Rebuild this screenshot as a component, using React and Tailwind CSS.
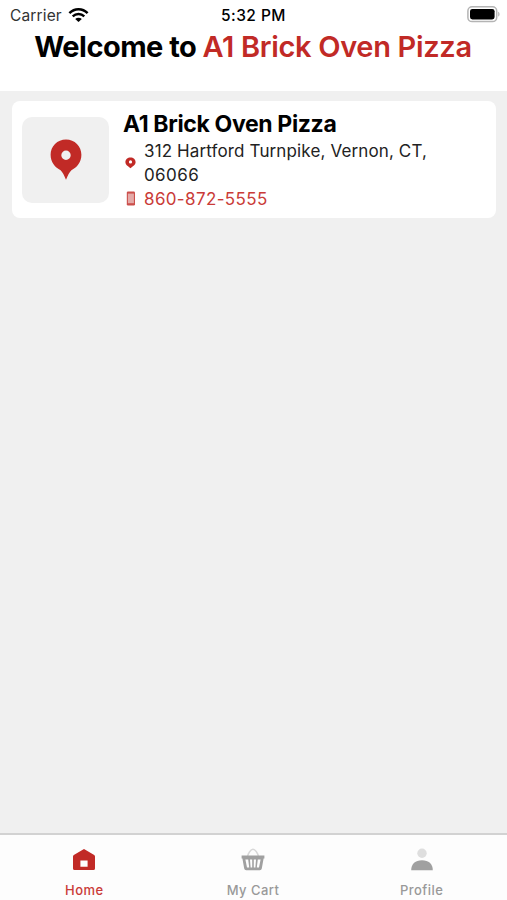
import { useState } from 'react';

const WifiIcon = () => (
  <svg width="21" height="16" viewBox="0 0 21 16" fill="none">
    <path d="M1.4 6.2C6.5 1 14.5 1 19.6 6.2" stroke="#000" strokeWidth="2.5" />
    <path d="M4.7 9.4C8 6.2 13 6.2 16.3 9.4" stroke="#000" strokeWidth="2.4" />
    <path d="M10.5 15L7.2 11.9C9 10.2 12 10.2 13.8 11.9Z" fill="#000" />
  </svg>
);

const BatteryIcon = () => (
  <svg width="34" height="17" viewBox="0 0 34 17" fill="none">
    <rect x="0.9" y="0.8" width="28.8" height="14.8" rx="4.2" stroke="#b4b4b4" strokeWidth="1.5" />
    <rect x="3" y="2.9" width="24.6" height="10.6" rx="2.4" fill="#000" />
    <path d="M31.2 5.8v4.8C33 10 33 6.4 31.2 5.8Z" fill="#b4b4b4" />
  </svg>
);

const PinIcon = ({ className }) => (
  <svg className={className} viewBox="0 0 32 42" fill="#c12a26">
    <path
      fillRule="evenodd"
      d="M16 0.5C7.3 0.5 0.6 7.2 0.6 15.8C0.6 23.2 5.2 28.8 10.6 31.2C12.6 33 14.2 36.5 16 40.8C17.8 36.5 19.4 33 21.4 31.2C26.8 28.8 31.4 23.2 31.4 15.8C31.4 7.2 24.7 0.5 16 0.5ZM16 11.5A4.7 4.7 0 1 1 16 20.9A4.7 4.7 0 1 1 16 11.5Z"
    />
  </svg>
);

const SmallPinIcon = () => (
  <svg width="11" height="12" viewBox="0 0 11 12" fill="#c12a26">
    <path
      fillRule="evenodd"
      d="M5.5 0.4C2.6 0.4 0.4 2.4 0.4 5.1C0.4 8 3 9.2 5.5 11.2C8 9.2 10.6 8 10.6 5.1C10.6 2.4 8.4 0.4 5.5 0.4ZM5.5 3.3A1.6 1.6 0 1 1 5.5 6.5A1.6 1.6 0 1 1 5.5 3.3Z"
    />
  </svg>
);

const PhoneIcon = () => (
  <svg width="10" height="15" viewBox="0 0 10 15">
    <rect x="0.8" y="0.5" width="8.2" height="14" rx="1.2" fill="#cb4f4b" />
    <rect x="1.9" y="2.6" width="6" height="9.6" fill="#e4aaa8" />
  </svg>
);

const HomeIcon = () => (
  <svg width="24" height="24" viewBox="0 0 24 24" fill="#c12a26">
    <path
      fillRule="evenodd"
      d="M12 1.1L22.2 7Q23 7.6 23 8.6V20.4Q23 22 21.4 22H2.6Q1 22 1 20.4V8.6Q1 7.6 1.8 7ZM8.4 12.6V18.8H15.6V12.6Z"
    />
  </svg>
);

const CartIcon = () => (
  <svg width="24" height="24" viewBox="0 0 24 24" fill="none">
    <path d="M6.6 8.4C7 5.4 9.8 1.3 12 1.3S17 5.4 17.4 8.4" stroke="#d8d8d8" strokeWidth="1.5" />
    <path
      fillRule="evenodd"
      d="M0.6 7.6H23.4V10.4H22.6L20.8 20.6Q20.5 22.2 18.8 22.2H5.2Q3.5 22.2 3.2 20.6L1.4 10.4H0.6ZM4.4 11.4L6 19.4H8.2L7.2 11.4ZM9 11.4L9.6 19.4H11.2V11.4ZM12.8 11.4V19.4H14.4L15 11.4ZM16.8 11.4L15.8 19.4H18L19.6 11.4Z"
      fill="#a0a0a0"
    />
  </svg>
);

const ProfileIcon = () => (
  <svg width="24" height="24" viewBox="0 0 24 24">
    <circle cx="12" cy="5.3" r="4.7" fill="#dedede" />
    <path d="M1.2 22.2C1.2 15.8 5.4 12.3 12 12.3S22.8 15.8 22.8 22.2Z" fill="#a0a0a0" />
  </svg>
);

const tabs = [
  { name: 'Home', Icon: HomeIcon },
  { name: 'My Cart', Icon: CartIcon },
  { name: 'Profile', Icon: ProfileIcon },
];

export default function App() {
  const [activeTab, setActiveTab] = useState('Home');

  return (
    <div className="w-full h-screen flex flex-col overflow-hidden bg-[#f0f0f0] text-black font-['Inter',sans-serif]">
      {/* Header */}
      <header className="h-[91px] shrink-0 bg-white">
        <div className="h-[30px] grid grid-cols-3 items-center pl-[10px] pr-[6px]">
          <div className="flex items-center gap-[6px] text-[15.5px] leading-5 tracking-[0.15px] text-[#333] pt-px">
            Carrier
            <span className="pb-[2px]"><WifiIcon /></span>
          </div>
          <div className="text-center text-[15.5px] leading-5 font-medium tracking-[0.45px] whitespace-nowrap pt-px pr-[4px]">5:32 PM</div>
          <div className="flex justify-end pb-px">
            <BatteryIcon />
          </div>
        </div>
        <h1 className="text-center text-[29px] leading-[33px] font-[650] tracking-[-0.54px] whitespace-nowrap pr-px">
          Welcome to <span className="text-[#c12a26] font-semibold tracking-[-0.32px]">A1 Brick Oven Pizza</span>
        </h1>
      </header>

      {/* Restaurant card */}
      <main className="flex-1 pt-[10px] pl-3 pr-[11px]">
        <div className="h-[117px] bg-white rounded-lg flex items-center pl-[10px]">
          <div className="w-[87px] h-[86px] mt-px shrink-0 rounded-[10px] bg-[#f0f0f0] flex items-center justify-center">
            <PinIcon className="w-8 h-[42px]" />
          </div>
          <div className="ml-[14px] w-[330px] pt-[2px]">
            <h2 className="text-[23px] leading-[29px] font-[650] tracking-[-0.35px] whitespace-nowrap">A1 Brick Oven Pizza</h2>
            <div className="flex items-center gap-[8px] pl-[2px]">
              <SmallPinIcon />
              <p className="text-[17px] leading-6 tracking-[0.13px] text-[#222] whitespace-nowrap">
                312 Hartford Turnpike, Vernon, CT,<br />
                <span className="tracking-[0.4px]">06066</span>
              </p>
            </div>
            <div className="flex items-center gap-[8px] pl-[3px]">
              <span className="pb-px"><PhoneIcon /></span>
              <p className="text-[17px] leading-6 tracking-[0.36px] text-[#ca3b38]">860-872-5555</p>
            </div>
          </div>
        </div>
      </main>

      {/* Bottom tabs */}
      <nav className="h-[67px] shrink-0 grid grid-cols-3 bg-[#fdfdfd] border-t-2 border-[#d2d2d2] pr-px">
        {tabs.map(({ name, Icon }) => (
          <button
            key={name}
            onClick={() => setActiveTab(name)}
            className={`flex flex-col items-center pt-[13px] text-[13px] leading-4 font-medium tracking-[0.45px] ${
              activeTab === name ? 'text-[#ca3b38]' : 'text-[#999]'
            }`}
          >
            <Icon />
            <span className="mt-[10px]">{name}</span>
          </button>
        ))}
      </nav>
    </div>
  );
}
